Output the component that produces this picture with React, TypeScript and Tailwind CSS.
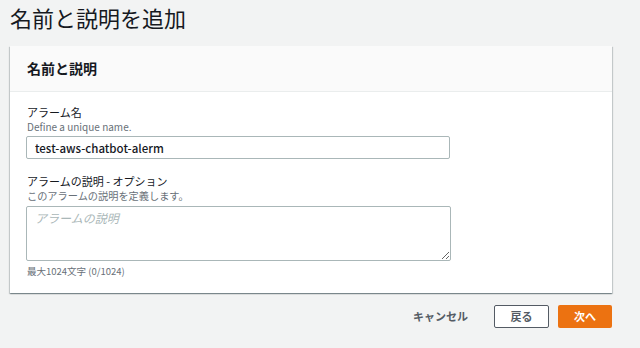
import React from "react";

const font = { fontFamily: '"Noto Sans CJK JP", "Noto Sans", sans-serif' };

const App = () => {
  return (
    <div
      className="min-h-[348px] w-[640px] bg-[#f2f3f3] pl-[10px] pr-[28px] text-[#16191f]"
      style={font}
    >
      <h1 className="mb-[11px] h-[35px] text-[22px] leading-[35px] font-normal">
        名前と説明を追加
      </h1>

      {/* Card */}
      <div className="bg-white shadow-[0_1px_1px_0_rgba(0,28,36,0.3),1px_1px_1px_0_rgba(0,28,36,0.15),-1px_1px_1px_0_rgba(0,28,36,0.15)]">
        <div className="flex h-[46px] items-center border-b border-[#eaeded] bg-[#fafafa] px-[17px]">
          <h2 className="text-[14px] font-bold">名前と説明</h2>
        </div>

        <div className="px-[16px] pt-[12px] pb-[15px]">
          <div className="pl-[1px]">
            <p className="text-[11px] leading-[16px]">アラーム名</p>
            <p className="text-[10px] leading-[13px] text-[#687078]">
              Define a unique name.
            </p>
          </div>
          <input
            type="text"
            defaultValue="test-aws-chatbot-alerm"
            className="mt-[3px] h-[23px] w-[424px] rounded-[2px] border border-[#aab7b8] bg-white px-[8px] text-[11.5px] font-medium text-[#16191f] outline-none"
          />

          <div className="mt-[14px] pl-[1px]">
            <p className="text-[11px] leading-[16px]">
              アラームの説明 - オプション
            </p>
            <p className="text-[10.2px] leading-[13px] text-[#687078]">
              このアラームの説明を定義します。
            </p>
          </div>
          <textarea
            placeholder="アラームの説明"
            className="mt-[4px] block h-[55px] w-[425px] rounded-[2px] border border-[#aab7b8] bg-white px-[8px] pt-[3px] text-[12px] leading-[16px] outline-none placeholder:italic placeholder:text-[#aab7b8]"
          />
          <p className="mt-[4px] pl-[1px] text-[9.5px] leading-[13px] text-[#687078]">
            最大1024文字 (0/1024)
          </p>
        </div>
      </div>

      {/* Actions */}
      <div className="mt-[12px] flex items-center justify-end">
        <button className="mr-[26px] text-[11px] font-bold text-[#545b64]">
          キャンセル
        </button>
        <button className="h-[23px] w-[55px] rounded-[2px] border border-[#545b64] bg-white text-[11px] font-bold text-[#545b64]">
          戻る
        </button>
        <button className="ml-[9px] h-[23px] w-[54px] rounded-[2px] bg-[#ec7211] text-[11px] font-bold text-white">
          次へ
        </button>
      </div>
    </div>
  );
};

export default App;
